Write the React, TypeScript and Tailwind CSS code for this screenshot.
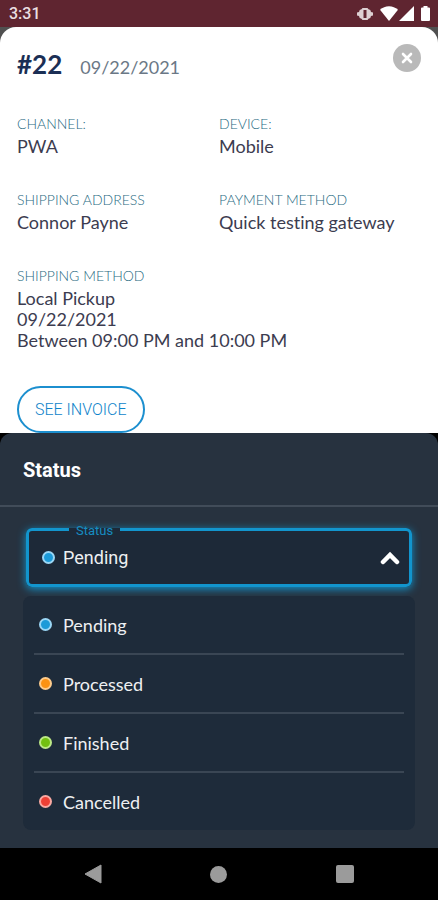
import { useState } from 'react'

type Status = 'Pending' | 'Processed' | 'Finished' | 'Cancelled'

const STATUSES: { name: Status; dot: string }[] = [
  { name: 'Pending', dot: 'bg-[#1c9ad8] border-[#9ad6f5]' },
  { name: 'Processed', dot: 'bg-[#fb9214] border-[#fdcb8c]' },
  { name: 'Finished', dot: 'bg-[#72c010] border-[#bce886]' },
  { name: 'Cancelled', dot: 'bg-[#ee4035] border-[#f9a9a2]' },
]

const DETAILS = [
  { label: 'CHANNEL:', lines: ['PWA'] },
  { label: 'DEVICE:', lines: ['Mobile'] },
  { label: 'SHIPPING ADDRESS', lines: ['Connor Payne'] },
  { label: 'PAYMENT METHOD', lines: ['Quick testing gateway'] },
  { label: 'SHIPPING METHOD', lines: ['Local Pickup', '09/22/2021', 'Between 09:00 PM and 10:00 PM'], wide: true },
]

function Dot({ color }: { color: string }) {
  return <span className={`size-[13px] shrink-0 rounded-full border-2 ${color}`} />
}

function StatusBar() {
  return (
    <div className="flex h-[27px] items-center justify-between bg-[#5f2530] pr-2 pl-[9px] text-white">
      <span className="font-['Roboto',sans-serif] text-base font-medium text-[#eadfe1]">3:31</span>
      <div className="flex items-center gap-[7px]">
        {/* vibrate */}
        <svg className="h-[14px] w-4" viewBox="0 0 16 14" fill="#ddd0d2">
          <path
            fillRule="evenodd"
            d="M5.500 1h5l1 1.200 1.800.8.700 2 2 .5v3l-2 .5-.7 2-1.800.8-1 1.200h-5l-1-1.200-1.800-.8L2 9 0 8.500v-3L2 5l.7-2 1.800-.8zM6.500 3v8h3V3z"
          />
        </svg>
        <div className="flex items-center gap-px">
          <svg className="h-[15px] w-[18px]" viewBox="0 0 18 15" fill="#fff">
            <path d="M9 15 0 3.700C2.500 1.500 5.600.300 9 .3s6.500 1.200 9 3.400z" />
          </svg>
          <svg className="h-[15px] w-[15px]" viewBox="0 0 15 15" fill="#fff">
            <path d="M15 0v15H0z" />
          </svg>
        </div>
        <svg className="h-[15px] w-[9px]" viewBox="0 0 9 15" fill="#fff">
          <path d="M2.500 0h4v1.500H8a1 1 0 0 1 1 1V14a1 1 0 0 1-1 1H1a1 1 0 0 1-1-1V2.500a1 1 0 0 1 1-1h1.500z" />
        </svg>
      </div>
    </div>
  )
}

function OrderDetails() {
  return (
    <div className="flex flex-1 flex-col bg-[#505050]">
      <main className="flex-1 rounded-t-2xl bg-white px-[17px] pt-[17px]">
        <header className="flex items-start justify-between">
          <div className="flex items-baseline gap-[18px] pt-1">
            <h1 className="text-[26px] leading-8 font-bold text-[#1b2f55]">#22</h1>
            <span className="text-lg text-[#6b7886]">09/22/2021</span>
          </div>
          <button type="button" aria-label="Close" className="flex size-7 items-center justify-center rounded-full bg-[#b9b9b9]">
            <svg className="size-3" viewBox="0 0 12 12" stroke="#fff" strokeWidth="2.600" strokeLinecap="round">
              <path d="m2 2 8 8M10 2l-8 8" />
            </svg>
          </button>
        </header>

        <dl className="mt-[33px] grid grid-cols-2 gap-y-[33px]">
          {DETAILS.map(d => (
            <div key={d.label} className={d.wide ? 'col-span-2' : ''}>
              <dt className="pb-0.5 text-sm leading-5 font-light text-[#286a82]">{d.label}</dt>
              {d.lines.map(line => (
                <dd key={line} className="text-lg leading-[21px] text-[#3c3c50] [font-variant-ligatures:none]">
                  {line}
                </dd>
              ))}
            </div>
          ))}
        </dl>

        <button
          type="button"
          className="mt-[35px] h-[47px] rounded-full border-2 border-[#1c8fcf] px-4 font-['Roboto',sans-serif] text-base font-light text-[#0f84ca]"
        >
          SEE INVOICE
        </button>
      </main>
    </div>
  )
}

export default function App() {
  const [status, setStatus] = useState<Status>('Pending')
  const current = STATUSES.find(s => s.name === status)!

  return (
    <div className="flex min-h-screen flex-col bg-black font-['Lato',sans-serif]">
      <StatusBar />
      <OrderDetails />

      <section className="rounded-t-xl bg-[#27323f] pb-[18px]">
        <h2 className="border-b-2 border-[#414c59] px-[23px] pt-[23px] pb-[21px] font-['Roboto',sans-serif] text-xl leading-7 font-bold text-white">
          Status
        </h2>

        <div className="px-[23px] pt-[14px]">
          <fieldset className="mx-[3px] rounded-md border-3 border-[#1295cd] bg-[#1d2938] pr-[9px] pl-[13px] font-['Roboto',sans-serif] shadow-[0_2px_8px_#1295cd]">
            <legend className="ml-[27px] h-4 px-[7px] text-[13px] leading-5 text-[#168dc2]">
              <label htmlFor="status">Status</label>
            </legend>
            <div className="flex h-[47px] items-center gap-2 pb-1.5">
              <Dot color={current.dot} />
              <select
                id="status"
                value={status}
                onChange={e => setStatus(e.target.value as Status)}
                className="min-w-0 flex-1 appearance-none bg-transparent text-lg text-[#eef0f2] outline-none"
              >
                {STATUSES.map(s => (
                  <option key={s.name}>{s.name}</option>
                ))}
              </select>
              <svg className="h-[14px] w-5" viewBox="0 0 20 14" fill="none" stroke="#fff" strokeWidth="4.500" strokeLinecap="round">
                <path d="m3 11 7-7 7 7" />
              </svg>
            </div>
          </fieldset>

          <ul className="mt-[9px] divide-y-2 divide-[#3a4654] rounded-lg bg-[#1e2b3a] px-[11px]">
            {STATUSES.map(s => (
              <li key={s.name}>
                <button
                  type="button"
                  onClick={() => setStatus(s.name)}
                  className="flex h-[57px] w-full items-center gap-[11px] px-[5px] text-lg text-[#eef0f2]"
                >
                  <Dot color={s.dot} />
                  {s.name}
                </button>
              </li>
            ))}
          </ul>
        </div>
      </section>

      <nav className="flex h-[52px] items-center justify-around bg-black px-[30px]">
        <button type="button" aria-label="Back">
          <svg className="h-5 w-[18px]" viewBox="0 0 18 20" fill="#9b9b9b">
            <path d="M17 1v18L1 10z" stroke="#9b9b9b" strokeLinejoin="round" />
          </svg>
        </button>
        <button type="button" aria-label="Home" className="size-[17px] rounded-full bg-[#9b9b9b]" />
        <button type="button" aria-label="Recents" className="size-[18px] rounded-xs bg-[#9b9b9b]" />
      </nav>
    </div>
  )
}
